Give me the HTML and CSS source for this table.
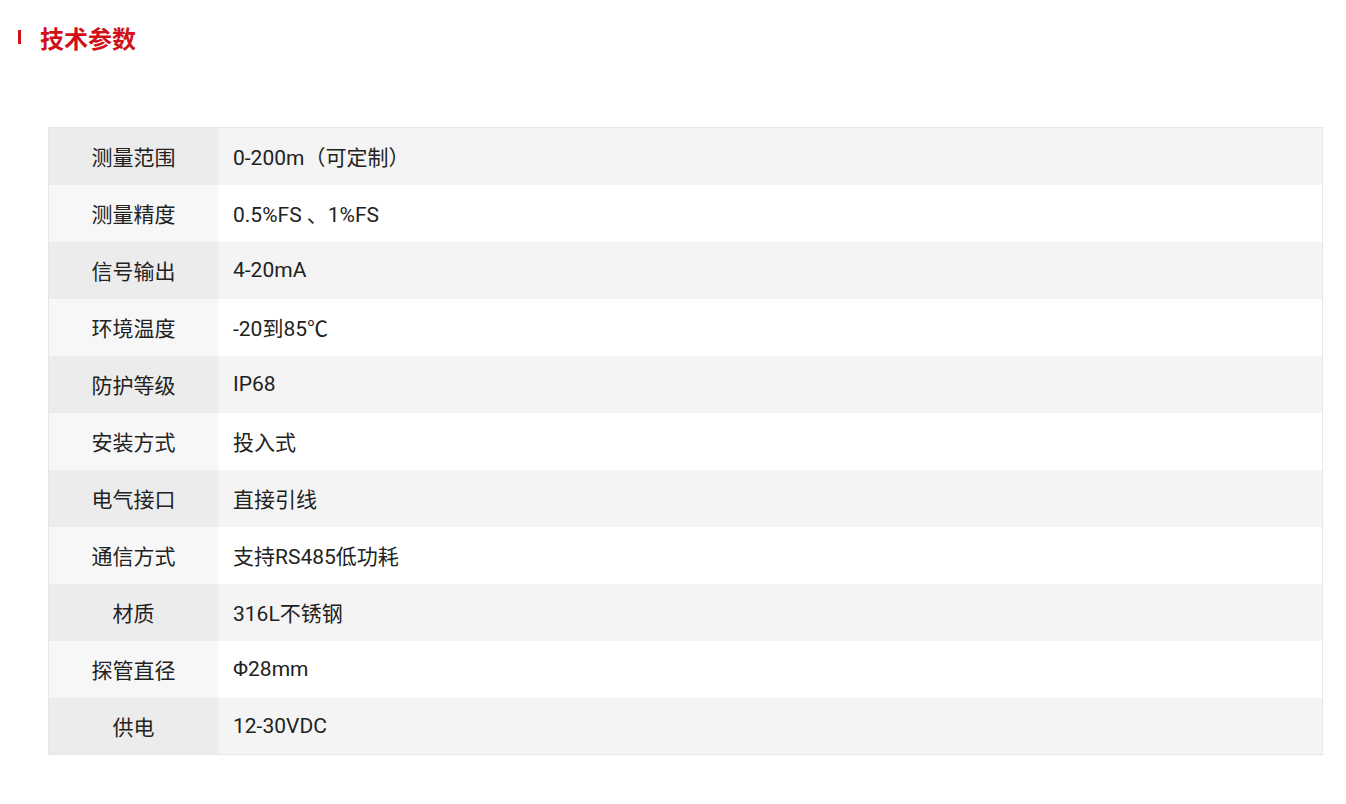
FILE: index.html
```html
<!DOCTYPE html>
<html lang="zh">
<head>
<meta charset="utf-8">
<link rel="stylesheet" href="styles.css">
</head>
<body>
<div class="page">
  <h2 class="title"><span class="bar"></span>技术参数</h2>
  <table class="spec">
    <tr><th>测量范围</th><td>0-200m（可定制）</td></tr>
    <tr><th>测量精度</th><td>0.5%FS 、1%FS</td></tr>
    <tr><th>信号输出</th><td>4-20mA</td></tr>
    <tr><th>环境温度</th><td>-20到85℃</td></tr>
    <tr><th>防护等级</th><td>IP68</td></tr>
    <tr><th>安装方式</th><td>投入式</td></tr>
    <tr><th>电气接口</th><td>直接引线</td></tr>
    <tr><th>通信方式</th><td>支持RS485低功耗</td></tr>
    <tr><th>材质</th><td>316L不锈钢</td></tr>
    <tr><th>探管直径</th><td>Φ28mm</td></tr>
    <tr><th>供电</th><td>12-30VDC</td></tr>
  </table>
</div>
</body>
</html>
```

FILE: styles.css
```css
html, body {
  margin: 0;
  padding: 0;
  background: #fff;
}
.page {
  padding: 20px 24px 0 18px;
  font-family: "Liberation Sans Narrow", Roboto, "Noto Sans CJK SC", sans-serif;
  color: #222;
}
.title {
  display: flex;
  align-items: center;
  margin: 0;
  height: 34px;
  font-size: 24px;
  font-weight: 700;
  color: #d0111a;
  font-family: "Noto Sans CJK SC", sans-serif;
}
.bar {
  display: inline-block;
  width: 3px;
  height: 14px;
  background: #d0111a;
  margin-right: 19px;
}
.spec {
  margin: 73px 0 0 30px;
  width: 1275px;
  border-collapse: collapse;
  border: 1px solid #e6e6e6;
  font-size: 21px;
}
.spec tr {
  height: 57px;
}
.spec th {
  width: 169px;
  padding: 0;
  font-weight: 400;
  text-align: center;
  background: #ececec;
  font-family: "Noto Sans CJK SC", sans-serif;
}
.spec td {
  padding: 0 0 0 15px;
  background: #f4f4f4;
  text-align: left;
}
.spec tr:nth-child(even) th {
  background: #f7f7f7;
}
.spec tr:nth-child(even) td {
  background: #fff;
}
```
